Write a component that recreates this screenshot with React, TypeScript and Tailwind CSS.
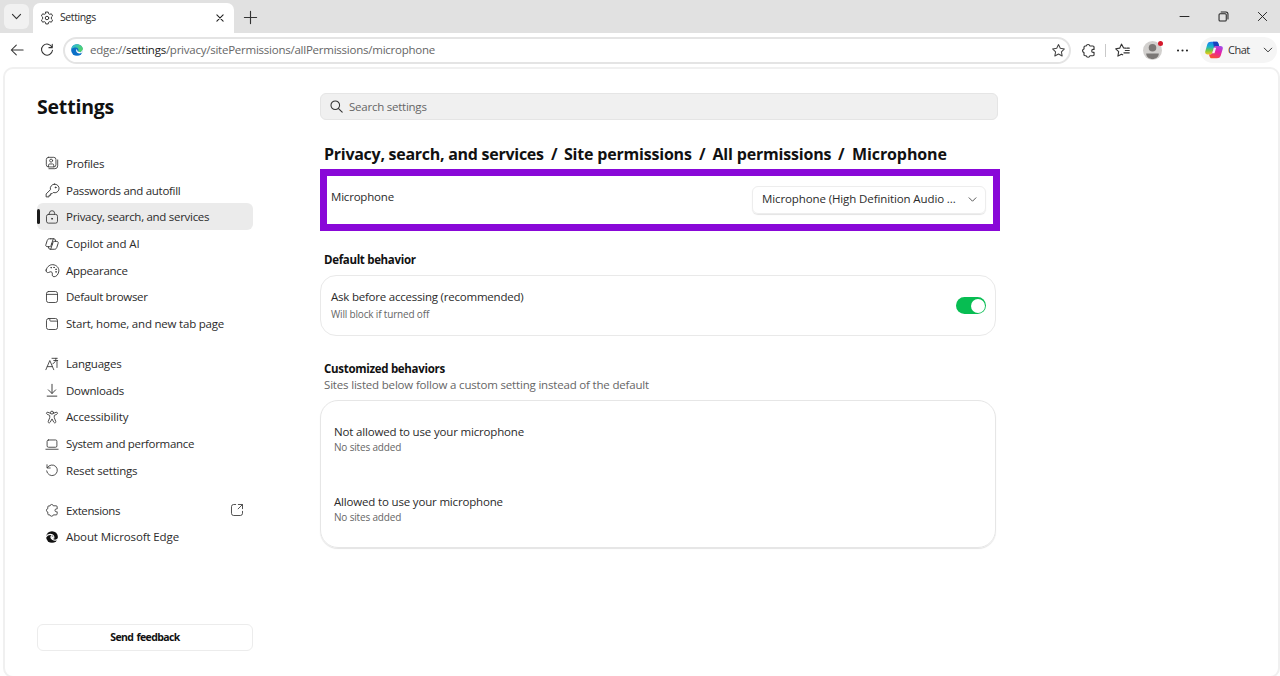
import React from "react";

type P = { d?: string; children?: React.ReactNode; className?: string; w?: number };

function Svg({ d, children, className = "size-[14px] text-[#3a3a3a]", w = 1 }: P) {
  return (
    <svg viewBox="0 0 16 16" fill="none" stroke="currentColor" strokeWidth={w} strokeLinecap="round" strokeLinejoin="round" className={"shrink-0 " + className}>
      {d && <path d={d} />}
      {children}
    </svg>
  );
}

const puzzle =
  "M5.6 3.2a2 2 0 0 1 3.9 0h3.2a1.200 1.200 0 0 1 1.200 1.200v2.400h-.9a1.600 1.600 0 0 0 0 3.200h.9v2.400a1.200 1.200 0 0 1-1.200 1.200H9.500a2 2 0 0 1-3.900 0H4.400a1.200 1.200 0 0 1-1.200-1.200V10.300a2 2 0 0 1 0-3.900V4.400a1.200 1.200 0 0 1 1.200-1.200Z";
const star = "M8 1.700l1.900 4 4.400.600-3.200 3.100.800 4.400L8 11.700l-3.900 2.100.800-4.400L1.700 6.300l4.400-.600Z";

const profiles = (
  <Svg>
    <rect x="1.500" y="1.500" width="11" height="11" rx="2.500" />
    <circle cx="7" cy="5.300" r="1.700" />
    <path d="M4 12.300V10.500a1.400 1.400 0 0 1 1.400-1.400h3.200A1.400 1.400 0 0 1 10 10.500v1.800M14.500 4.500v6.800a3.200 3.200 0 0 1-3.200 3.200H4.500" />
  </Svg>
);
const key = (
  <Svg className="size-[15px] text-[#3a3a3a]" d="M10.200 1.200a4.600 4.600 0 0 0-4.400 5.900L1.200 11.700v3.100h3.100v-1.700h1.700v-1.700h1.500l1.300-1.300a4.600 4.600 0 1 0 1.400-8.900Z">
    <circle cx="11.300" cy="4.700" r=".5" fill="currentColor" />
  </Svg>
);
const lock = (
  <Svg>
    <rect x="1.700" y="5" width="12.600" height="10" rx="2.200" />
    <path d="M5 5V3.800a3 3 0 0 1 6 0V5" />
    <circle cx="8" cy="10" r=".6" fill="currentColor" />
  </Svg>
);
const copilot = (
  <Svg w={1.100} d="M6.500 2h3.700c.9 0 1.300.5 1.500 1.300l.5 1.700h1.300c1.300 0 1.900 1 1.500 2.200l-1.500 4.700c-.4 1.300-1.200 2.100-2.500 2.100H5.800c-.9 0-1.300-.5-1.500-1.300L3.800 11H2.500C1.200 11 .600 10 1 8.800l1.500-4.700C2.900 2.800 3.700 2 5 2h1.500M9.500 2 6.800 10c-.3.700-.7 1-1.400 1H3.800M6.500 14l2.700-8c.3-.7.700-1 1.400-1h1.600M7.500 8h1" />
);
const palette = (
  <Svg className="size-[15px] text-[#3a3a3a]" d="M1.200 7.500C2.300 3.300 6 1 9.700 2c3.800 1 5.700 4.300 4.900 7.600-.7 3-2.600 5-4.900 5-1.700 0-2.200-1.300-1.900-2.700.3-1.700-.8-2.900-2.200-2.500l-1.800.7C2 10.700.8 9.300 1.200 7.500Z">
    <circle cx="6.500" cy="5" r=".3" />
    <circle cx="9.600" cy="4.700" r=".3" />
    <circle cx="11.700" cy="6.700" r=".3" />
    <circle cx="11.700" cy="9.500" r=".3" />
  </Svg>
);
const browser = (
  <Svg>
    <rect x="1.700" y="1.700" width="12.600" height="12.600" rx="2.400" />
    <path d="M1.700 5h12.600" />
  </Svg>
);
const tabPage = (
  <Svg>
    <rect x="1.700" y="1.700" width="12.600" height="12.600" rx="2.400" />
    <path d="M5.500 1.700v2a1 1 0 0 0 1 1h7.800" />
  </Svg>
);
const language = <Svg d="M1 14.500 5.500 4 10 14.500M2.600 11h5.800M8 1.500h6M12.500 1.500c0 3-1 5-3.500 6.200M10 4l4.500 0M13.700 4v8" />;
const download = <Svg d="M8 1.500v10.300M3.800 7.800 8 12l4.200-4.200M2.500 15h11" w={1.100} />;
const access = (
  <Svg>
    <circle cx="8" cy="3" r="1.700" />
    <path d="M6.300 3.800 3.400 2.600c-1.700-.6-2.500 1.500-1 2.200L5.400 6.200v2.600L3.700 13c-.6 1.700 1.500 2.400 2.200 1L8 10.200l2.100 3.800c.7 1.400 2.800.7 2.200-1l-1.700-4.200V6.200l3-1.400c1.500-.7.700-2.800-1-2.200L9.700 3.800" />
  </Svg>
);
const laptop = (
  <Svg>
    <rect x="2.400" y="3.400" width="11.200" height="8.300" rx="1.500" />
    <path d="M1 14h14" />
  </Svg>
);
const reset = <Svg d="M2.300 2v3.700H6M2.600 5.400A6.100 6.100 0 1 1 1.900 9" />;
const edgeMono = (
  <Svg w={0}>
    <circle cx="8" cy="8" r="6.700" fill="#111" />
    <path d="M1 7.800C2.500 5.600 5 4.700 7.300 5.200c2.300.5 3.300 2.300 2.700 4.200M15 10.300c-1.600 1.300-4.300 1.700-6.200.6C7 9.900 6.500 8.200 7.300 6.700" stroke="#fff" strokeWidth="1.300" />
    <path d="M7.500 7.200c-.6 1.700.2 2.900 1.500 3.500l.9-1.300c.5-1-.4-2.500-2.400-2.200Z" fill="#fff" />
  </Svg>
);

function Row({ icon, label, t, active, end }: { icon: React.ReactNode; label: string; t: string; active?: boolean; end?: React.ReactNode }) {
  return (
    <li className={"flex h-[26.700px] items-center rounded-[6px] pr-[9px] " + (active ? "bg-[#ebebeb]" : "")}>
      <span className={"h-[15px] w-[3px] shrink-0 rounded-full " + (active ? "bg-[#1b1b1b]" : "")} />
      <span className="ml-[4.500px] flex w-[15px] shrink-0 items-center justify-center">{icon}</span>
      <span className={"ml-[6.500px] grow whitespace-nowrap " + t}>{label}</span>
      {end}
    </li>
  );
}

function Sites({ title, t }: { title: string; t: string }) {
  return (
    <div className="flex h-[70px] flex-col">
      <div className={"h-[18px] text-[11.500px] leading-[18px] text-[#2b2b2b] " + t}>{title}</div>
      <div className="text-[10px] leading-[13px] tracking-[-0.170px] text-[#666]">No sites added</div>
    </div>
  );
}

export default function App() {
  return (
    <div className="flex h-[676px] w-[1280px] flex-col overflow-hidden bg-white font-['Open_Sans','Noto_Sans',sans-serif] text-[#2b2b2b]">
      <header className="flex h-[33px] shrink-0 items-start bg-[#e1e1e1]">
        <button className="mt-[4px] ml-[4px] flex h-[25px] w-[25px] items-center justify-center rounded-[6px] bg-[#f1f1f1]">
          <Svg d="M3 5.500l5 5 5-5" w={1.400} className="size-[13px] text-[#333]" />
        </button>
        <div className="mt-[3px] ml-[4px] flex h-[30px] w-[201px] items-center rounded-t-[7px] bg-white pl-[7px]">
          <Svg className="size-[14px] text-[#333]" w={1.100}>
            <path d="M6.600 1.200h2.800l.4 1.900 1.300.7 1.900-.6 1.400 2.400L13 6.900v2.200l1.400 1.300-1.400 2.400-1.900-.6-1.300.7-.4 1.900H6.600l-.4-1.900-1.300-.7-1.900.6-1.400-2.400L3 9.100V6.900L1.600 5.600 3 3.200l1.900.6 1.300-.7Z" />
            <circle cx="8" cy="8" r="2" />
          </Svg>
          <span className="ml-[6px] grow text-[10.500px] tracking-[-0.400px]">Settings</span>
          <Svg d="M3 3l10 10M13 3L3 13" w={1.700} className="mr-[9px] size-[10px] text-[#222]" />
        </div>
        <Svg d="M8 1.500v13M1.500 8h13" w={1.200} className="mt-[10px] ml-[9px] size-[15px] text-[#333]" />
        <div className="grow" />
        <div className="flex h-[32px] items-center gap-[28px] pr-[12px] text-[#222]">
          <Svg d="M1.500 8h13" w={1.400} className="size-[11px]" />
          <Svg w={1.500} className="size-[11px]">
            <rect x="1.500" y="4" width="10.500" height="10.500" rx="1.500" />
            <path d="M4.500 1.500h7a3 3 0 0 1 3 3v7" />
          </Svg>
          <Svg d="M2 2l12 12M14 2L2 14" w={1.400} className="size-[11px]" />
        </div>
      </header>

      <div className="flex h-[34px] shrink-0 items-center text-[#333]">
        <Svg d="M15 8H1.500M7.200 2.300 1.500 8l5.700 5.700" w={1.200} className="ml-[10px] size-[14px]" />
        <Svg d="M13.800 5A6.300 6.300 0 1 0 14.300 8.300M14 1.500V5.300h-3.800" w={1.200} className="ml-[16px] size-[14px]" />
        <div className="ml-[9px] flex h-[27px] w-[1008px] items-center rounded-full border-2 border-[#e4e4e4] bg-white pr-[3px] pl-[6px]">
          <svg viewBox="0 0 16 16" className="size-[12px] shrink-0">
            <defs>
              <linearGradient id="eg" x1="0" y1="0" x2="1" y2="0.500">
                <stop offset="0" stopColor="#2bb5e8" />
                <stop offset="1" stopColor="#4fd46a" />
              </linearGradient>
            </defs>
            <circle cx="8" cy="8" r="7.800" fill="#0b6fc7" />
            <path d="M.4 7C1 2.800 4 .2 8 .2c4.600 0 7.800 3.200 7.800 6.600 0 2.300-1.700 4-4 4-1.800 0-2.500-.8-2-1.600.8-2.400-1-4.400-3.300-4.400C4 4.800 1.500 5.400.4 7Z" fill="url(#eg)" />
            <path d="M7.600 6.700c-1.800 2.600.2 5.800 3.600 5.900 1.300 0 2.800-.3 4.300-1.500L16 7l-3 4-4-1Z" fill="#fff" />
          </svg>
          <span className="ml-[7px] grow text-[11.500px] tracking-[-0.240px] text-[#666]">
            edge://<span className="text-[#222]">settings</span>/privacy/sitePermissions/allPermissions/microphone
          </span>
          <Svg d={star} className="size-[15px] text-[#444]" w={1.100} />
        </div>
        <Svg d={puzzle} className="ml-[10px] size-[15px]" w={1.200} />
        <span className="ml-[9px] h-[13px] w-px bg-[#c9c9c9]" />
        <Svg className="ml-[9px] size-[15px]" w={1.200}>
          <path d="M11.300 5.500 9.200 5.300 6.900 1.200 5 5.500.8 6.200l3.100 3.100-.8 4.700 3.700-2.100 1.400.7M11 8h4.200M9.500 10.500h5.700M12.500 5.500h2.700" />
        </Svg>
        <div className="relative ml-[13px] size-[19px]">
          <svg viewBox="0 0 19 19" className="size-[19px]">
            <circle cx="9.500" cy="9.500" r="9.500" fill="#d2d0ce" />
            <circle cx="9.500" cy="6.800" r="3.800" fill="#7b7876" />
            <path d="M3.200 12.500h12.600c0 3.300-2.800 5.500-6.300 5.500s-6.300-2.200-6.300-5.500Z" fill="#7b7876" />
          </svg>
          <span className="absolute top-0 right-[-1px] size-[5px] rounded-full bg-[#d4182b]" />
        </div>
        <Svg w={0} className="ml-[14px] size-[13px]">
          <g fill="#222">
            <circle cx="2.500" cy="8" r="1.300" />
            <circle cx="8" cy="8" r="1.300" />
            <circle cx="13.500" cy="8" r="1.300" />
          </g>
        </Svg>
        <div className="ml-[11px] flex h-[26px] w-[77px] items-center rounded-full bg-[#f5f5f5] pl-[5px]">
          <svg viewBox="0 0 18 18" className="size-[18px] shrink-0">
            <defs>
              <linearGradient id="ca" x1="0.300" y1="0" x2="0.300" y2="1">
                <stop offset="0" stopColor="#1a7df0" />
                <stop offset="0.400" stopColor="#18b5c9" />
                <stop offset="0.700" stopColor="#7cc93c" />
                <stop offset="1" stopColor="#f5c51c" />
              </linearGradient>
              <linearGradient id="cb" x1="0.800" y1="0" x2="0.300" y2="1">
                <stop offset="0" stopColor="#a24be8" />
                <stop offset="0.450" stopColor="#e620a8" />
                <stop offset="1" stopColor="#f8502c" />
              </linearGradient>
            </defs>
            <path d="M6 .8h5.500c1 0 1.500.6 1.800 1.500l.9 2.700H11c-1.200 0-1.700.6-2.100 1.800L7.300 12c-.4 1-.9 1.400-2 1.400H2.500C.8 13.400-.2 12 .3 10.300l2-7C2.900 1.600 4.100.8 6 .8Z" fill="url(#ca)" />
            <path d="M8 .8h3.500c1 0 1.500.6 1.800 1.500l.9 2.700H11c-1.200 0-1.700.6-2 1.800Z" fill="#1740bd" />
            <path d="M12 17.200H6.500c-1 0-1.500-.6-1.800-1.500L4 13.400h1.300c1.100 0 1.600-.4 2-1.400l1.600-5.200C9.300 5.600 9.800 5 11 5h4.500c1.700 0 2.700 1.200 2.200 2.900l-2 6.800c-.6 1.700-1.800 2.500-3.700 2.500Z" fill="url(#cb)" />
            <path d="M8.900 6.800h2.300L9.500 12.300H7.200Z" fill="#f5f5f5" />
          </svg>
          <span className="ml-[5px] w-[21px] text-[11px] tracking-[-0.500px]">Chat</span>
          <Svg d="M3 5.500l5 5 5-5" w={1.300} className="ml-[13px] size-[12px]" />
        </div>
      </div>

      <div className="ml-[3px] flex h-[611px] w-[1277px] shrink-0 rounded-[10px] border-2 border-[#f0f0f0] bg-white">
        <aside className="ml-[32px] w-[216px] shrink-0">
          <h1 className="mt-[23px] text-[19.500px] leading-[30px] font-bold tracking-[-0.200px] text-[#111]">Settings</h1>
          <nav className="mt-[28.100px] flex flex-col gap-[13.300px] text-[11.500px]">
            <ul>
              <Row icon={profiles} label="Profiles" t="tracking-[-0.250px]" />
              <Row icon={key} label="Passwords and autofill" t="tracking-[-0.290px]" />
              <Row icon={lock} label="Privacy, search, and services" t="tracking-[-0.290px]" active />
              <Row icon={copilot} label="Copilot and AI" t="tracking-[-0.100px]" />
              <Row icon={palette} label="Appearance" t="tracking-[-0.250px]" />
              <Row icon={browser} label="Default browser" t="tracking-[-0.310px]" />
              <Row icon={tabPage} label="Start, home, and new tab page" t="tracking-[-0.210px]" />
            </ul>
            <ul>
              <Row icon={language} label="Languages" t="tracking-[-0.210px]" />
              <Row icon={download} label="Downloads" t="tracking-[-0.220px]" />
              <Row icon={access} label="Accessibility" t="tracking-[-0.150px]" />
              <Row icon={laptop} label="System and performance" t="tracking-[-0.310px]" />
              <Row icon={reset} label="Reset settings" t="tracking-[-0.220px]" />
            </ul>
            <ul>
              <Row
                icon={<Svg d={puzzle} />}
                label="Extensions"
                t="tracking-[-0.380px]"
                end={<Svg d="M6.500 1.700H4.200a2.500 2.500 0 0 0-2.500 2.500v7.600a2.500 2.500 0 0 0 2.500 2.500h7.600a2.500 2.500 0 0 0 2.500-2.500V9.500M9.500 1.700h4.800v4.800M14 2 9.300 6.700" />}
              />
              <Row icon={edgeMono} label="About Microsoft Edge" t="tracking-[-0.110px]" />
            </ul>
          </nav>
          <button className="mt-[73.400px] flex h-[27px] w-full items-center justify-center rounded-[6px] border border-[#ececec] pt-px text-[10.500px] font-bold tracking-[-0.600px] text-[#111]">
            <span className="[word-spacing:1px]">Send feedback</span>
          </button>
        </aside>

        <main className="ml-[67px] w-[680px]">
          <div className="mt-[24px] flex h-[27px] w-[678px] items-center rounded-[6px] border border-[#e5e5e5] bg-[#f0f0f0] pl-[8.500px]">
            <Svg className="size-[13px] text-[#333]" w={1.300}>
              <circle cx="6.500" cy="6.500" r="5.300" />
              <path d="M10.500 10.500 15 15" />
            </Svg>
            <span className="ml-[6.500px] text-[11.500px] tracking-[-0.240px] text-[#666]">Search settings</span>
          </div>
          <h2 className="mt-[21px] ml-[4px] flex h-[25px] items-center text-[16px] font-bold whitespace-nowrap text-[#111]">
            <span className="w-[227px] tracking-[-0.270px]">Privacy, search, and services</span>
            <span className="w-[13px]">/</span>
            <span className="w-[135px] tracking-[-0.200px]">Site permissions</span>
            <span className="w-[13.500px]">/</span>
            <span className="w-[125.500px] tracking-[-0.180px]">All permissions</span>
            <span className="w-[14px]">/</span>
            <span className="tracking-[-0.100px]">Microphone</span>
          </h2>
          <section className="mt-[3px] flex h-[62px] w-[680px] justify-between border-[7px] border-[#8908d8] pr-[7px] pl-[4px]">
            <span className="mt-[12px] text-[11.500px] leading-[18px] tracking-[-0.200px]">Microphone</span>
            <div className="mt-[10px] flex h-[28px] w-[234px] items-center justify-between rounded-[6px] border border-[#ededed] pr-[7px] pb-[2px] pl-[9px] text-[11.500px] shadow-[0_1px_1px_#e4e4e4]">
              <span className="tracking-[-0.110px] whitespace-nowrap">Microphone (High Definition Audio ...</span>
              <Svg d="M3 5.500l5 5 5-5" w={1.300} className="size-[11px] text-[#444]" />
            </div>
          </section>
          <h3 className="mt-[20px] ml-[4px] text-[11.500px] leading-[18px] font-bold tracking-[-0.320px] text-[#111]">Default behavior</h3>
          <section className="mt-[6px] flex h-[61px] w-[676px] items-center justify-between rounded-[16px] border border-[#e9e9e9] pr-[9px] pl-[10px]">
            <div>
              <div className="text-[11.500px] leading-[18px] tracking-[-0.220px]">Ask before accessing (recommended)</div>
              <div className="text-[10px] leading-[17px] tracking-[-0.170px] text-[#666]">Will block if turned off</div>
            </div>
            <span className="flex h-[17px] w-[30px] items-center justify-end rounded-full bg-[#07bd52] pr-[1px]">
              <span className="size-[14px] rounded-full bg-white" />
            </span>
          </section>
          <h3 className="mt-[24px] ml-[4px] text-[11.500px] leading-[17px] font-bold tracking-[-0.300px] text-[#111]">Customized behaviors</h3>
          <p className="ml-[4px] text-[11.500px] leading-[16px] tracking-[-0.180px] text-[#666]">Sites listed below follow a custom setting instead of the default</p>
          <section className="mt-[7px] h-[148px] w-[676px] rounded-[18px] border border-[#e6e6e6] pt-[22px] pl-[13px] shadow-[0_1px_1px_#e4e4e4]">
            <Sites title="Not allowed to use your microphone" t="tracking-[-0.170px]" />
            <Sites title="Allowed to use your microphone" t="tracking-[-0.170px]" />
          </section>
        </main>
      </div>
    </div>
  );
}
